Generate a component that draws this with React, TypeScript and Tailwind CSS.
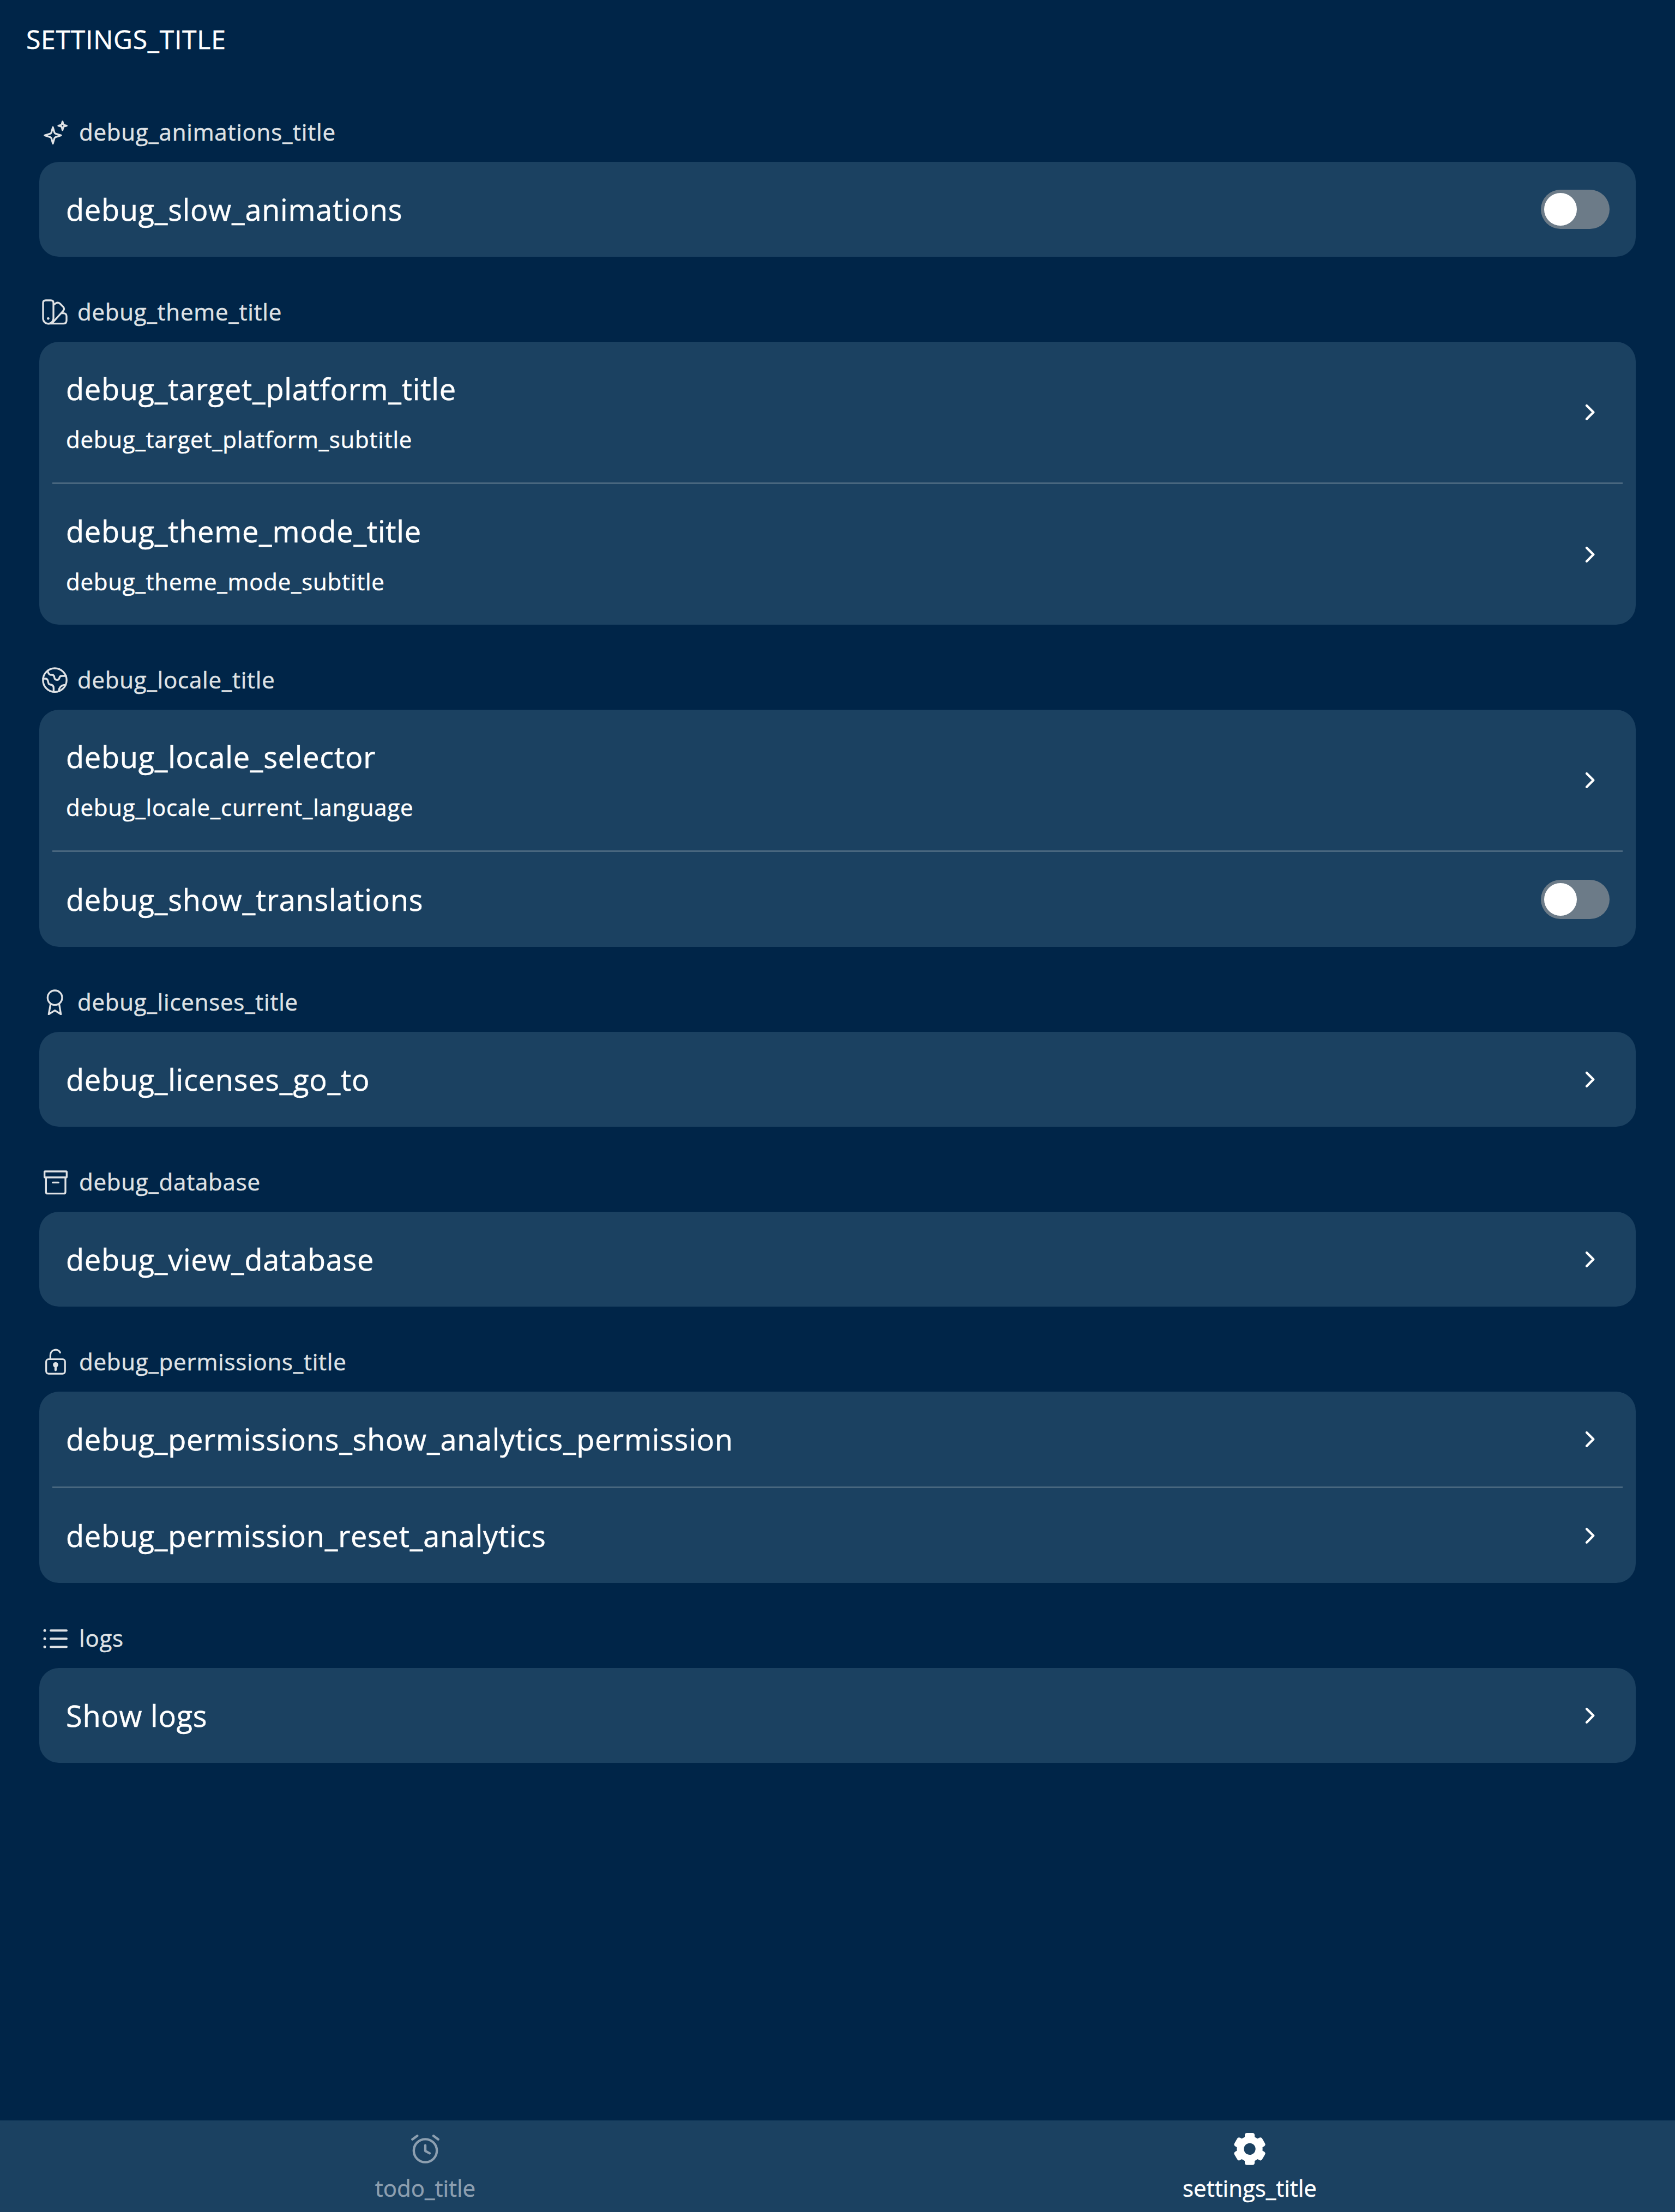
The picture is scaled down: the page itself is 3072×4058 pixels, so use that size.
import type { ReactNode } from 'react';

const stroke = {
  fill: 'none',
  stroke: 'currentColor',
  strokeWidth: 10,
  strokeLinecap: 'round' as const,
  strokeLinejoin: 'round' as const,
};

function SectionIcon({ viewBox, children }: { viewBox: string; children: ReactNode }) {
  return (
    <svg viewBox={viewBox} className="size-12 shrink-0" {...stroke}>
      {children}
    </svg>
  );
}

const Sparkles = () => (
  <SectionIcon viewBox="51 53 144 144">
    <path d="M111 99 L119 127 Q121 133 127 135 L156 144 L127 153 Q121 155 119 161 L111 189 L103 161 Q101 155 95 153 L66 144 L95 135 Q101 133 103 127 Z" />
    <path d="M164 68 L168 83 Q169 86 172 87 L187 91 L172 95 Q169 96 168 99 L164 115 L160 99 Q159 96 156 95 L141 91 L156 87 Q159 86 160 83 Z" />
  </SectionIcon>
);

const Swatches = () => (
  <SectionIcon viewBox="51 53 144 144">
    <path d="M72 62 H100 Q114 62 114 76 V162 A28.5 28.5 0 0 1 57 162 V76 Q57 62 72 62 Z" />
    <path d="M116 86 L127 78 Q139 71 150 80 L168 98 Q177 108 167 121 L110 184" />
    <path d="M158 133 H168 Q186 133 186 150 V172 Q186 190 168 190 H86" />
    <circle cx="85" cy="162" r="7" fill="currentColor" stroke="none" />
  </SectionIcon>
);

const Globe = () => (
  <SectionIcon viewBox="51 53 144 144">
    <circle cx="121.500" cy="127" r="65" />
    <path d="M83 77 Q86 97 99 98 H108 Q118 100 119 112 C122 130 144 130 147 114 Q149 104 160 104 H183" />
    <path d="M57 119 H70 Q80 119 83 130 L87 145 Q89 152 98 152 Q115 154 115 170 V190" />
    <path d="M144 187 C144 168 158 153 180 153" />
  </SectionIcon>
);

const Medal = () => (
  <SectionIcon viewBox="51 56 144 144">
    <circle cx="122" cy="105" r="40" />
    <path d="M98 142 L88 196 L122 175 L155 196 L146 142" />
  </SectionIcon>
);

const Archive = () => (
  <SectionIcon viewBox="51 56 144 144">
    <rect x="65" y="71" width="122" height="33" rx="3" />
    <path d="M73 106 V184 Q73 193 82 193 H171 Q180 193 180 184 V106 M110 132 H142" />
  </SectionIcon>
);

const Unlock = () => (
  <SectionIcon viewBox="51 56 144 150">
    <rect x="72" y="117" width="108" height="83" rx="14" />
    <path d="M96 116 V94 C96 60 140 52 152 79" />
    <circle cx="126" cy="149" r="15" fill="currentColor" stroke="none" />
    <path d="M126 150 V179" strokeWidth="13" />
  </SectionIcon>
);

const List = () => (
  <SectionIcon viewBox="51 62 144 144">
    <path d="M99 93 H186 M99 138 H186 M99 183 H186" strokeWidth="12" />
    <path d="M66 93 h0.01 M66 138 h0.01 M66 183 h0.01" strokeWidth="15" />
  </SectionIcon>
);

const Chevron = () => (
  <svg viewBox="300 61 216 216" className="size-18 shrink-0" {...stroke} strokeWidth={13}>
    <path d="M390 133 L427 170 L390 207" />
  </svg>
);

const Toggle = () => (
  <div className="flex h-18 w-[126px] shrink-0 items-center rounded-full bg-[#6c7b88] p-1.5">
    <div className="size-15 rounded-full bg-white" />
  </div>
);

const AlarmClock = () => (
  <svg viewBox="270 126 180 180" className="size-15" {...stroke} strokeWidth={13}>
    <circle cx="360" cy="226.500" r="63.500" />
    <path d="M360 197 V228 L384 241 M289 164 L316 145 M405 145 L431 164" />
  </svg>
);

const Gear = () => (
  <svg viewBox="336 126 180 180" className="size-15" fill="currentColor">
    <circle cx="426" cy="217" r="71" />
    {[0, 60, 120].map((angle) => (
      <rect key={angle} x="399" y="129" width="54" height="176" rx="12" transform={`rotate(${angle} 426 217)`} />
    ))}
    <circle cx="426" cy="217" r="32" className="fill-[#1b4161]" />
  </svg>
);

type Row = { title: string; subtitle?: string; toggle?: boolean };
type Section = { label: string; icon: ReactNode; wide?: boolean; rows: Row[] };

const sections: Section[] = [
  { label: 'debug_animations_title', icon: <Sparkles />, wide: true, rows: [{ title: 'debug_slow_animations', toggle: true }] },
  {
    label: 'debug_theme_title',
    icon: <Swatches />,
    rows: [
      { title: 'debug_target_platform_title', subtitle: 'debug_target_platform_subtitle' },
      { title: 'debug_theme_mode_title', subtitle: 'debug_theme_mode_subtitle' },
    ],
  },
  {
    label: 'debug_locale_title',
    icon: <Globe />,
    rows: [
      { title: 'debug_locale_selector', subtitle: 'debug_locale_current_language' },
      { title: 'debug_show_translations', toggle: true },
    ],
  },
  { label: 'debug_licenses_title', icon: <Medal />, rows: [{ title: 'debug_licenses_go_to' }] },
  { label: 'debug_database', icon: <Archive />, wide: true, rows: [{ title: 'debug_view_database' }] },
  {
    label: 'debug_permissions_title',
    icon: <Unlock />,
    wide: true,
    rows: [{ title: 'debug_permissions_show_analytics_permission' }, { title: 'debug_permission_reset_analytics' }],
  },
  { label: 'logs', icon: <List />, wide: true, rows: [{ title: 'Show logs' }] },
];

function SettingsRow({ title, subtitle, toggle }: Row) {
  return (
    <div className={subtitle ? 'flex h-[258px] items-center pr-12 pl-[49px]' : 'flex h-[174px] items-center pr-12 pl-[49px]'}>
      <div className={subtitle ? 'flex flex-1 flex-col gap-[27px] pb-[3px]' : 'flex-1'}>
        <div className="text-[54px] leading-[74px]">{title}</div>
        {subtitle && <div className="text-[42px] leading-[57px]">{subtitle}</div>}
      </div>
      {toggle ? <Toggle /> : <Chevron />}
    </div>
  );
}

function SettingsSection({ label, icon, wide, rows }: Section) {
  return (
    <section>
      <div className="flex h-[156px] items-center pt-[45px] pl-[5px] text-[42px] leading-[57px] text-[#dfe2e5]">
        {icon}
        <span className={wide ? 'ml-5' : 'ml-[17px]'}>{label}</span>
      </div>
      <div className="rounded-[36px] bg-[#1b4161]">
        {rows.map((row, i) => (
          <div key={row.title}>
            {i > 0 && <div className="mx-6 h-[3px] bg-[#49677f]" />}
            <SettingsRow {...row} />
          </div>
        ))}
      </div>
    </section>
  );
}

export default function App() {
  return (
    <div className="flex h-[4058px] w-[3072px] flex-col bg-[#002548] font-['Open_Sans',sans-serif] tracking-[0.78px] text-white [-webkit-text-stroke:0.5px_currentColor]">
      <header className="flex h-[141px] items-center px-12 pt-[3px] text-[48px] leading-[66px]">SETTINGS_TITLE</header>
      <main className="flex-1 px-[72px]">
        {sections.map((section) => (
          <SettingsSection key={section.label} {...section} />
        ))}
      </main>
      <nav className="grid h-[168px] grid-cols-2 bg-[#1b4161] px-6 text-[42px] leading-[57px] tracking-normal">
        <div className="flex flex-col items-center gap-[13px] pt-[22px] text-[#8d9fb0]">
          <AlarmClock />
          <span>todo_title</span>
        </div>
        <div className="flex flex-col items-center gap-[13px] pt-[22px] font-medium">
          <Gear />
          <span>settings_title</span>
        </div>
      </nav>
    </div>
  );
}
